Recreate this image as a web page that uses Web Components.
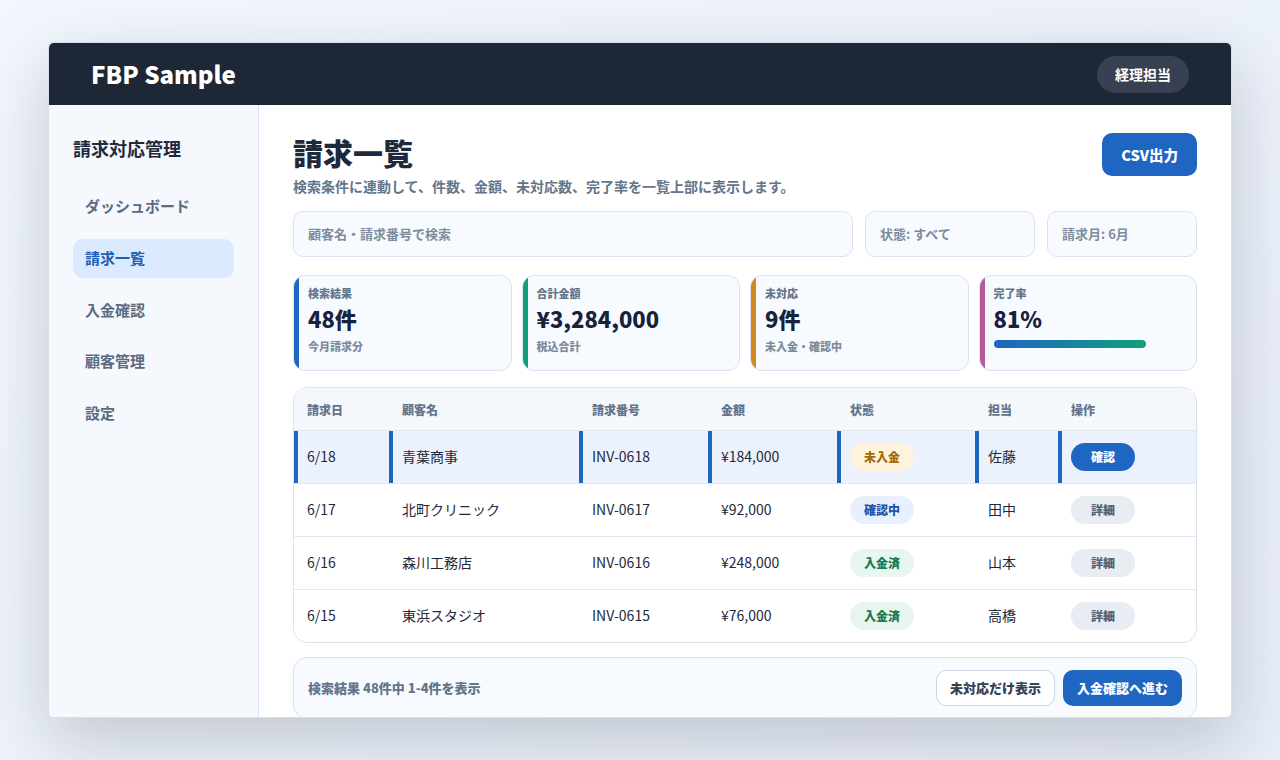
<!DOCTYPE html>
<html lang="ja">
<head>
<meta charset="utf-8">
<title>FBP Sample</title>
<style>
  html, body { margin: 0; height: 100%; }
  body {
    box-sizing: border-box;
    height: 760px;
    padding: 42px 48px;
    overflow: hidden;
    background: linear-gradient(135deg, #f2f6fd 0%, #e8eef8 100%);
    color: #1e293b;
    font-family: "Noto Sans CJK JP", "Noto Sans", sans-serif;
    line-height: 1.45;
  }
</style>
</head>
<body>
<app-shell>
  <top-bar slot="top" brand="FBP Sample" user="経理担当"></top-bar>
  <side-nav slot="side" heading="請求対応管理">
    <nav-item>ダッシュボード</nav-item>
    <nav-item active>請求一覧</nav-item>
    <nav-item>入金確認</nav-item>
    <nav-item>顧客管理</nav-item>
    <nav-item>設定</nav-item>
  </side-nav>

  <page-head heading="請求一覧" note="検索条件に連動して、件数、金額、未対応数、完了率を一覧上部に表示します。">
    <ui-button kind="primary" size="large">CSV出力</ui-button>
  </page-head>

  <filter-bar>
    <filter-field>顧客名・請求番号で検索</filter-field>
    <filter-field>状態: すべて</filter-field>
    <filter-field>請求月: 6月</filter-field>
  </filter-bar>

  <stat-row>
    <stat-card label="検索結果" value="48件" sub="今月請求分" accent="#1f65c2"></stat-card>
    <stat-card label="合計金額" value="¥3,284,000" sub="税込合計" accent="#12a07c"></stat-card>
    <stat-card label="未対応" value="9件" sub="未入金・確認中" accent="#d1881f"></stat-card>
    <stat-card label="完了率" value="81%" progress="81" accent="#b65a9f"></stat-card>
  </stat-row>

  <invoice-table>
    <invoice-row highlight date="6/18" customer="青葉商事" number="INV-0618" amount="¥184,000" owner="佐藤">
      <status-pill slot="status" tone="warn">未入金</status-pill>
      <row-action slot="action" primary>確認</row-action>
    </invoice-row>
    <invoice-row date="6/17" customer="北町クリニック" number="INV-0617" amount="¥92,000" owner="田中">
      <status-pill slot="status" tone="info">確認中</status-pill>
      <row-action slot="action">詳細</row-action>
    </invoice-row>
    <invoice-row date="6/16" customer="森川工務店" number="INV-0616" amount="¥248,000" owner="山本">
      <status-pill slot="status" tone="ok">入金済</status-pill>
      <row-action slot="action">詳細</row-action>
    </invoice-row>
    <invoice-row date="6/15" customer="東浜スタジオ" number="INV-0615" amount="¥76,000" owner="高橋">
      <status-pill slot="status" tone="ok">入金済</status-pill>
      <row-action slot="action">詳細</row-action>
    </invoice-row>
  </invoice-table>

  <list-footer summary="検索結果 48件中 1-4件を表示">
    <ui-button kind="ghost">未対応だけ表示</ui-button>
    <ui-button kind="primary">入金確認へ進む</ui-button>
  </list-footer>
</app-shell>

<script>
(function () {
  // small base class: fills the shadow root from a css string and a render function
  function component(name, css, render) {
    customElements.define(name, class extends HTMLElement {
      connectedCallback() {
        if (this.shadowRoot) return;
        const root = this.attachShadow({ mode: 'open' });
        root.innerHTML = `<style>${css}</style>${render(this)}`;
      }
    });
  }
  const attr = (el, key) => el.getAttribute(key) || '';

  component('app-shell', `
    :host {
      display: flex;
      flex-direction: column;
      box-sizing: border-box;
      width: 1184px;
      height: 676px;
      overflow: hidden;
      background: #fff;
      border: 1px solid #d6dee9;
      border-radius: 6px;
      box-shadow: 0 24px 70px rgba(15, 23, 42, 0.2);
    }
    .body { flex: 1; min-height: 0; display: flex; }
    main {
      flex: 1;
      min-width: 0;
      box-sizing: border-box;
      padding: 28px 34px 0;
      display: flex;
      flex-direction: column;
    }
    ::slotted(*) { flex: none; }
  `, () => `
    <slot name="top"></slot>
    <div class="body">
      <slot name="side"></slot>
      <main><slot></slot></main>
    </div>
  `);

  component('top-bar', `
    :host {
      flex: none;
      display: flex;
      align-items: center;
      justify-content: space-between;
      height: 62px;
      padding: 0 42px;
      background: #1e2736;
      color: #fff;
    }
    .brand { font-size: 24px; font-weight: 800; line-height: 1; }
    .user {
      padding: 0 18px;
      height: 37px;
      line-height: 37px;
      border-radius: 19px;
      background: #374151;
      font-size: 14px;
      font-weight: 700;
    }
  `, el => `<div class="brand">${attr(el, 'brand')}</div><div class="user">${attr(el, 'user')}</div>`);

  component('side-nav', `
    :host {
      flex: none;
      display: block;
      box-sizing: border-box;
      width: 210px;
      padding: 30px 24px 0;
      background: #f5f8fd;
      border-right: 1px solid #d9e2ee;
    }
    h2 { margin: 0 0 25.75px; font-size: 18px; font-weight: 700; line-height: 26px; color: #1e293b; }
    nav { display: flex; flex-direction: column; gap: 12px; }
  `, el => `<h2>${attr(el, 'heading')}</h2><nav><slot></slot></nav>`);

  component('nav-item', `
    :host {
      display: block;
      padding: 8.25px 12px 9.75px;
      border-radius: 10px;
      font-size: 15px;
      font-weight: 700;
      line-height: 21.75px;
      color: #5b6b80;
    }
    :host([active]) { background: #dbeafe; color: #1f5fb5; }
  `, () => `<slot></slot>`);

  component('page-head', `
    :host {
      display: flex;
      justify-content: space-between;
      align-items: flex-start;
      margin-bottom: 15px;
    }
    h1 { margin: 0 0 4px; font-size: 30px; font-weight: 800; line-height: 39px; color: #1e293b; }
    p { margin: 0; font-size: 14px; font-weight: 700; line-height: 20px; color: #64748b; }
  `, el => `
    <div><h1>${attr(el, 'heading')}</h1><p>${attr(el, 'note')}</p></div>
    <slot></slot>
  `);

  component('ui-button', `
    :host {
      display: block;
      box-sizing: border-box;
      height: 36px;
      padding: 0 13px;
      border: 1px solid transparent;
      border-radius: 10px;
      font-size: 13px;
      font-weight: 800;
      line-height: 34px;
      white-space: nowrap;
    }
    :host([kind="primary"]) { background: #1f65c2; color: #fff; }
    :host([kind="ghost"]) { background: #fff; border-color: #ccd6e4; color: #334155; }
    :host([size="large"]) { height: 43px; line-height: 41px; padding: 0 18px; font-size: 14.5px; }
  `, () => `<slot></slot>`);

  component('filter-bar', `
    :host {
      display: grid;
      grid-template-columns: 1fr 170px 150px;
      gap: 12px;
      margin-bottom: 18px;
    }
  `, () => `<slot></slot>`);

  component('filter-field', `
    :host {
      display: block;
      box-sizing: border-box;
      height: 46px;
      padding: 0 14px;
      background: #f7fbff;
      border: 1px solid #d9e2ee;
      border-radius: 10px;
      font-size: 13px;
      font-weight: 700;
      line-height: 44px;
      color: #7d8b9d;
    }
  `, () => `<slot></slot>`);

  component('stat-row', `
    :host {
      display: grid;
      grid-template-columns: repeat(4, 1fr);
      gap: 10px;
      margin-bottom: 16px;
    }
  `, () => `<slot></slot>`);

  component('stat-card', `
    :host {
      display: block;
      position: relative;
      box-sizing: border-box;
      height: 96px;
      padding: 9px 14px 0;
      overflow: hidden;
      background: #f7fbff;
      border: 1px solid #d9e2ee;
      border-radius: 12px;
    }
    .bar { position: absolute; left: 0; top: 0; bottom: 0; width: 5px; }
    .label, .sub { font-size: 11px; font-weight: 800; line-height: 16px; color: #64748b; }
    .sub { color: #7d8b9d; margin-top: 3px; }
    .value { font-size: 22px; font-weight: 800; line-height: 34px; color: #16233a; }
    .track { margin-top: 5px; height: 8px; }
    .fill { height: 100%; border-radius: 4px; background: linear-gradient(90deg, #1f65c2, #12a07c); }
  `, el => `
    <div class="bar" style="background:${attr(el, 'accent')}"></div>
    <div class="label">${attr(el, 'label')}</div>
    <div class="value">${attr(el, 'value')}</div>
    ${el.hasAttribute('progress')
      ? `<div class="track"><div class="fill" style="width:${attr(el, 'progress')}%"></div></div>`
      : `<div class="sub">${attr(el, 'sub')}</div>`}
  `);

  component('invoice-table', `
    :host {
      display: block;
      --cols: 95px 190px 129px 129px 138px 83px 138px;
      margin-bottom: 14px;
      overflow: hidden;
      border: 1px solid #d9e2ee;
      border-radius: 14px;
    }
    .head {
      display: grid;
      grid-template-columns: var(--cols);
      align-items: center;
      height: 42px;
      background: #f4f7fb;
      border-bottom: 1px solid #e2e8f0;
      font-size: 12px;
      font-weight: 800;
      color: #64748b;
    }
    .head div { padding: 1px 0 0 13px; }
  `, () => `
    <div class="head">
      <div>請求日</div><div>顧客名</div><div>請求番号</div><div>金額</div><div>状態</div><div>担当</div><div>操作</div>
    </div>
    <slot></slot>
  `);

  component('invoice-row', `
    :host {
      display: grid;
      grid-template-columns: var(--cols);
      height: 52px;
      border-bottom: 1px solid #e2e8f0;
      font-size: 14px;
      color: #1e293b;
    }
    :host(:last-child) { border-bottom: none; }
    :host([highlight]) { background: #ebf2fd; }
    .cell { display: flex; align-items: center; padding-left: 13px; }
    .text { padding-bottom: 2px; box-sizing: border-box; }
    :host([highlight]) .cell { border-left: 4px solid #1f65c2; padding-left: 9px; }
  `, el => `
    <div class="cell text">${attr(el, 'date')}</div>
    <div class="cell text">${attr(el, 'customer')}</div>
    <div class="cell text">${attr(el, 'number')}</div>
    <div class="cell text">${attr(el, 'amount')}</div>
    <div class="cell"><slot name="status"></slot></div>
    <div class="cell text">${attr(el, 'owner')}</div>
    <div class="cell"><slot name="action"></slot></div>
  `);

  component('status-pill', `
    :host {
      display: block;
      box-sizing: border-box;
      width: 64px;
      height: 28px;
      border-radius: 14px;
      font-size: 12px;
      font-weight: 800;
      line-height: 28px;
      text-align: center;
    }
    :host([tone="warn"]) { background: #fff3dc; color: #a86a00; }
    :host([tone="info"]) { background: #e8f0fd; color: #1f55a8; }
    :host([tone="ok"]) { background: #e7f6ee; color: #18794e; }
  `, () => `<slot></slot>`);

  component('row-action', `
    :host {
      display: block;
      box-sizing: border-box;
      width: 64px;
      height: 28px;
      border-radius: 14px;
      background: #e8ecf3;
      color: #556375;
      font-size: 12px;
      font-weight: 800;
      line-height: 28px;
      text-align: center;
    }
    :host([primary]) { background: #1f65c2; color: #fff; }
  `, () => `<slot></slot>`);

  component('list-footer', `
    :host {
      flex: none;
      display: flex;
      align-items: center;
      justify-content: space-between;
      box-sizing: border-box;
      height: 62px;
      padding: 0 14px;
      background: #f7fbff;
      border: 1px solid #d9e2ee;
      border-radius: 14px;
    }
    .summary { font-size: 13px; font-weight: 800; color: #64748b; }
    .actions { display: flex; gap: 8px; }
  `, el => `<div class="summary">${attr(el, 'summary')}</div><div class="actions"><slot></slot></div>`);
})();
</script>
</body>
</html>
